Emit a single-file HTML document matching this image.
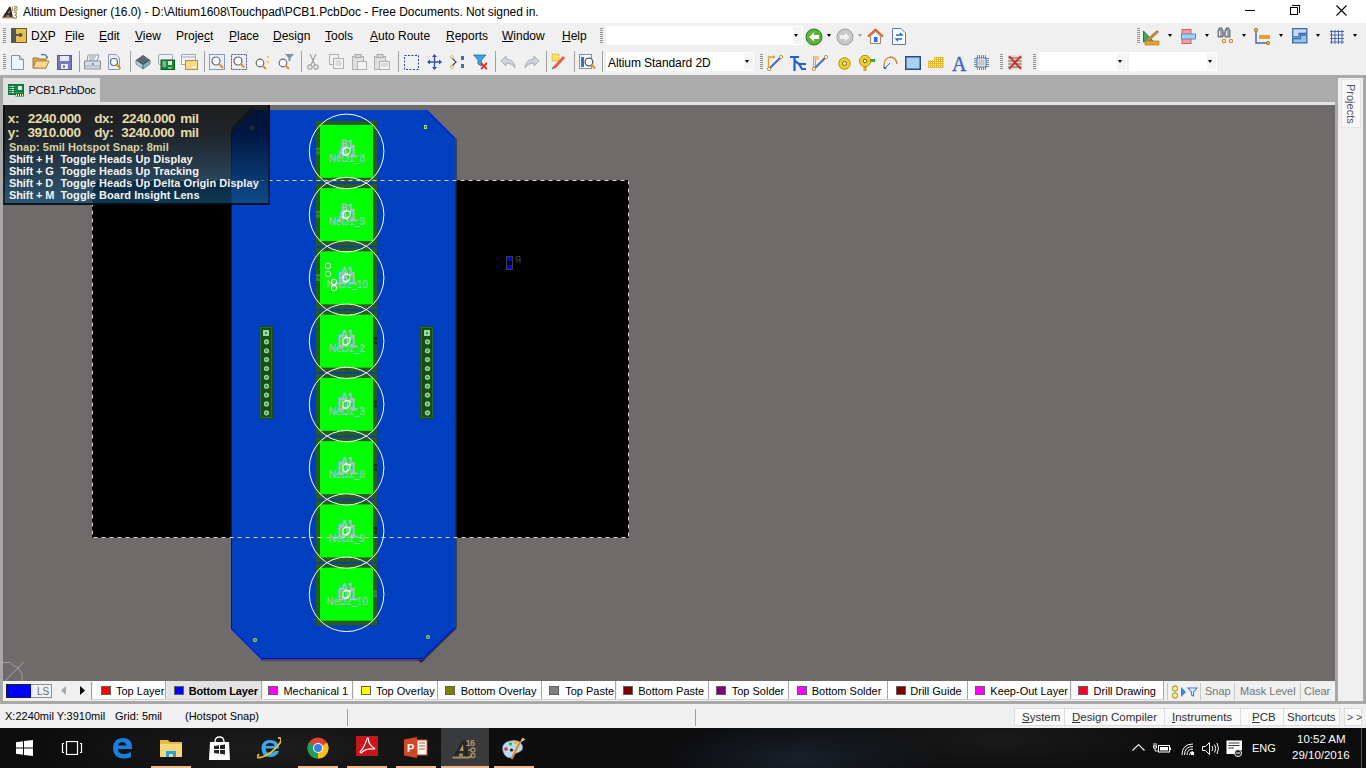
<!DOCTYPE html>
<html><head><meta charset="utf-8">
<style>
*{margin:0;padding:0;box-sizing:border-box}
html,body{width:1366px;height:768px;overflow:hidden;background:#f0f0f0;font-family:"Liberation Sans",sans-serif;font-size:12px;color:#000}
.a{position:absolute}
.t{position:absolute;white-space:nowrap;line-height:1}
u{text-decoration:underline;text-underline-offset:1px}
#title{left:0;top:0;width:1366px;height:22px;background:#fff}
#menu{left:0;top:22px;width:1366px;height:26px;background:#f0f0f0}
#tb{left:0;top:48px;width:1366px;height:27px;background:#f0f0f0}
#tabs{left:0;top:75px;width:1366px;height:30px;background:#ababab}
#canvas{left:3px;top:105px;width:1332px;height:576px;background:#6f6b6a;overflow:hidden}
#layers{left:0;top:681px;width:1366px;height:23px;background:#f0f0f0}
#status{left:0;top:704px;width:1366px;height:24px;background:#f0f0f0}
#task{left:0;top:728px;width:1366px;height:40px;background:#1b1a1a;overflow:hidden}
.grip{width:3px;background:repeating-linear-gradient(#909090 0 1px,transparent 1px 2px)}
.sep{top:3px;width:1px;height:21px;background:#a0a0a0}
.arr{width:0;height:0;border-left:2.8px solid transparent;border-right:2.8px solid transparent;border-top:3.5px solid #000}
.hud{font-weight:bold;letter-spacing:-0.2px}
.ltab{top:0;height:18.5px;border-right:1px solid #a8a8a8;border-bottom:1px solid #d0d0d0;border-radius:0 0 1px 1px}
.sb{font-size:11.5px;color:#303030}

</style></head><body>
<!-- TITLE -->
<div id="title" class="a">
 <svg class="a" style="left:0px;top:2px" width="20" height="18" viewBox="0 0 20 18">
  <path d="M2.3 15.5 L9.3 4.8 L10.6 4.8 L13 15.5 Z" fill="#262626"/>
  <path d="M7.8 11.5 L9.6 7.5 L9.9 11.5Z" fill="#b09060"/>
  <rect x="6.5" y="13" width="3" height="2.5" fill="#a08050"/>
  <rect x="2.2" y="14.8" width="12" height="1.6" fill="#a88a5a"/>
  <path d="M12.5 4.5V9M14 5Q17.5 4 17 6Q14 6 14.5 8.5Q17 9.5 17 7" fill="none" stroke="#a88a5a" stroke-width="1.1"/>
  <path d="M13.5 10.5Q16.5 9.5 16.5 11.5Q16 13 14.5 13Q17 13.5 16.5 15.5Q15 17 13.5 15.5" fill="none" stroke="#a88a5a" stroke-width="1.1"/>
 </svg>
 <div class="t" style="left:23px;top:6px;font-size:12px;letter-spacing:-0.05px">Altium Designer (16.0) - D:\Altium1608\Touchpad\PCB1.PcbDoc - Free Documents. Not signed in.</div>
 <div class="a" style="left:1245px;top:10px;width:10px;height:1px;background:#000"></div>
 <div class="a" style="left:1290px;top:7px;width:8px;height:8px;border:1px solid #000"></div>
 <div class="a" style="left:1292px;top:5px;width:8px;height:8px;border-top:1px solid #000;border-right:1px solid #000"></div>
 <svg class="a" style="left:1336px;top:5px" width="11" height="11"><path d="M0.5 0.5L10.5 10.5M10.5 0.5L0.5 10.5" stroke="#000" stroke-width="1.1"/></svg>
</div>
<!-- MENU -->
<div id="menu" class="a">
 <div class="a" style="left:0;top:0;width:1366px;height:1px;background:#fff"></div>
 <div class="grip a" style="left:3px;top:6px;height:15px"></div>
 <svg class="a" style="left:11px;top:6px" width="16" height="15" viewBox="0 0 16 15">
  <rect x="0.5" y="0.5" width="15" height="14" fill="#e8c050" stroke="#6b5a30"/>
  <rect x="1" y="1" width="4" height="13" fill="#555"/>
  <rect x="5" y="6" width="4" height="2" fill="#555"/>
  <circle cx="9.5" cy="7" r="2" fill="#555"/>
 </svg>
 <div class="t" style="left:31px;top:8px">D<u>X</u>P</div>
 <div class="t" style="left:65px;top:8px"><u>F</u>ile</div>
 <div class="t" style="left:99px;top:8px"><u>E</u>dit</div>
 <div class="t" style="left:135px;top:8px"><u>V</u>iew</div>
 <div class="t" style="left:176px;top:8px">Proje<u>c</u>t</div>
 <div class="t" style="left:229px;top:8px"><u>P</u>lace</div>
 <div class="t" style="left:273px;top:8px"><u>D</u>esign</div>
 <div class="t" style="left:325px;top:8px"><u>T</u>ools</div>
 <div class="t" style="left:370px;top:8px"><u>A</u>uto Route</div>
 <div class="t" style="left:446px;top:8px"><u>R</u>eports</div>
 <div class="t" style="left:502px;top:8px"><u>W</u>indow</div>
 <div class="t" style="left:562px;top:8px"><u>H</u>elp</div>
 <div class="grip a" style="left:600px;top:6px;height:15px"></div>
 <div class="a" style="left:606px;top:4px;width:197px;height:19px;background:#fff"></div>
 <div class="a" style="left:793px;top:5px;width:9px;height:17px;background:#f4f4f4"></div>
 <div class="arr a" style="left:794px;top:12px"></div>
 <svg class="a" style="left:805px;top:6px" width="18" height="18" viewBox="0 0 18 18">
  <circle cx="9" cy="9" r="8" fill="#5cb43c" stroke="#2e7a20"/>
  <path d="M4 9 L9 4.5 L9 7 L14 7 L14 11 L9 11 L9 13.5Z" fill="#fff"/>
 </svg>
 <div class="arr a" style="left:827px;top:12px"></div>
 <svg class="a" style="left:836px;top:6px" width="18" height="18" viewBox="0 0 18 18">
  <circle cx="9" cy="9" r="8" fill="#c8c8c8" stroke="#a0a0a0"/>
  <path d="M14 9 L9 4.5 L9 7 L4 7 L4 11 L9 11 L9 13.5Z" fill="#f0f0f0"/>
 </svg>
 <div class="arr a" style="left:858px;top:12px;border-top-color:#a0a0a0"></div>
 <svg class="a" style="left:867px;top:6px" width="17" height="17" viewBox="0 0 17 17">
  <path d="M1 8.5 L8.5 1.5 L16 8.5" fill="none" stroke="#d8602a" stroke-width="2"/>
  <path d="M3.5 8 L8.5 3.5 L13.5 8 L13.5 15.5 L3.5 15.5Z" fill="#f8f8f8" stroke="#a08070"/>
  <rect x="7" y="9" width="3.5" height="5" fill="#2d6fd0"/>
 </svg>
 <svg class="a" style="left:892px;top:6px" width="14" height="17" viewBox="0 0 14 17">
  <path d="M0.5 0.5 L9 0.5 L13.5 5 L13.5 16.5 L0.5 16.5Z" fill="#fff" stroke="#5a7ab0"/>
  <path d="M4 7 L10 7 L8 5 M10 11 L4 11 L6 13" fill="none" stroke="#1a6ad0" stroke-width="1.3"/>
 </svg>
 <div class="grip a" style="left:1137px;top:6px;height:15px"></div>
 <svg class="a" style="left:1143px;top:7px" width="18" height="17" viewBox="0 0 18 17">
  <path d="M0.5 2 L0.5 13 L11 13Z" fill="#3aa860" stroke="#1e7a40"/>
  <path d="M4 12 L15 2" stroke="#c08040" stroke-width="3"/>
  <rect x="2" y="12" width="14" height="4" fill="#e8a030" stroke="#b07020" stroke-width="0.6"/>
 </svg>
 <div class="arr a" style="left:1168px;top:12px"></div>
 <svg class="a" style="left:1181px;top:7px" width="15" height="15" viewBox="0 0 15 15">
  <rect x="1" y="0.5" width="9" height="14" fill="#f2a0a0" stroke="#d06060"/>
  <rect x="0.5" y="5" width="14" height="5" fill="#a8d0f0" stroke="#4a90c8"/>
 </svg>
 <div class="arr a" style="left:1205px;top:12px"></div>
 <svg class="a" style="left:1217px;top:5px" width="16" height="17" viewBox="0 0 16 17">
  <path d="M2 1H5V3H6V6H8V3H9V1H12V3H13V10H8V8H6V10H1V3H2Z" fill="#9aa4ac" stroke="#4a5258" stroke-width="0.8"/>
  <path d="M2.5 4V9M9.5 4V9" stroke="#e8eef2" stroke-width="1"/>
  <circle cx="7" cy="14" r="1.7" fill="none" stroke="#c89030" stroke-width="1.2"/>
  <circle cx="14" cy="14" r="1.7" fill="none" stroke="#c89030" stroke-width="1.2"/>
 </svg>
 <div class="arr a" style="left:1242px;top:12px"></div>
 <svg class="a" style="left:1254px;top:6px" width="17" height="17" viewBox="0 0 17 17">
  <path d="M2 2 L2 15 L14 15" fill="none" stroke="#4a6ab0" stroke-width="1.5"/>
  <rect x="5" y="7" width="11" height="4" fill="#e8a030"/>
  <circle cx="2" cy="2" r="1.6" fill="#f0c060" stroke="#a07020"/>
  <circle cx="14" cy="15" r="1.6" fill="#f0c060" stroke="#a07020"/>
 </svg>
 <div class="arr a" style="left:1279px;top:12px"></div>
 <svg class="a" style="left:1292px;top:6px" width="16" height="16" viewBox="0 0 16 16">
  <path d="M0.7 0.7H14.8V5.5H7V8.8H0.7Z" fill="#c0dcf4" stroke="#3a68a8" stroke-width="1.3"/>
  <path d="M0.7 14.8V10.5H8.5V7H14.8V14.8Z" fill="#94c4ea" stroke="#3a68a8" stroke-width="1.3"/>
 </svg>
 <div class="arr a" style="left:1316px;top:12px"></div>
 <svg class="a" style="left:1329px;top:7px" width="16" height="16" viewBox="0 0 16 16">
  <path d="M2.5 1V15M6 1V15M9.5 1V15M13 1V15M1 2.5H15M1 6H15M1 9.5H15M1 13H15" stroke="#4a68a8" stroke-width="1"/>
 </svg>
 <div class="arr a" style="left:1353px;top:12px"></div>
</div>

<!-- TOOLBAR -->
<div id="tb" class="a">
 <div class="grip a" style="left:3px;top:6px;height:15px"></div>
 <svg class="a" style="left:11px;top:7px" width="13" height="15" viewBox="0 0 13 15"><path d="M0.5 0.5H8.5L12.5 4.5V14.5H0.5Z" fill="#eef4fc" stroke="#8090b0"/><path d="M8.5 0.5V4.5H12.5" fill="#c8d4e8" stroke="#8090b0"/></svg>
 <svg class="a" style="left:32px;top:5px" width="18" height="17" viewBox="0 0 18 17"><path d="M1 5H6L7 6H14V15H1Z" fill="#d8a850" stroke="#a07830"/><path d="M1 15L4 8H17L14 15Z" fill="#f8d890" stroke="#b08840"/><path d="M9 2Q13 0 15 4" fill="none" stroke="#4070a0" stroke-width="1.2"/><path d="M13.5 4.5L16 3.5L15.5 6Z" fill="#4070a0"/></svg>
 <svg class="a" style="left:57px;top:7px" width="15" height="15" viewBox="0 0 15 15"><rect x="0.5" y="0.5" width="14" height="14" fill="#7a78b8" stroke="#5a58a0"/><rect x="3" y="1" width="9" height="5" fill="#e8e8f8"/><rect x="4" y="9" width="7" height="5" fill="#e8e8f8"/><rect x="6" y="10.5" width="2" height="2" fill="#5a58a0"/></svg>
 <div class="sep a" style="left:79px"></div>
 <svg class="a" style="left:84px;top:6px" width="17" height="16" viewBox="0 0 17 16"><path d="M4 1H15L13 7H3Z" fill="#fafafa" stroke="#9098a8"/><path d="M5 3H12M5 5H11" stroke="#9098a8"/><path d="M0.5 7H16.5V15H0.5Z" fill="#d8dce4" stroke="#8890a0"/><path d="M1 12H16" stroke="#a0a8b8"/><rect x="8" y="9" width="1.5" height="2" fill="#707880"/></svg>
 <svg class="a" style="left:108px;top:6px" width="14" height="16" viewBox="0 0 14 16"><path d="M0.5 0.5H8L11.5 4V15.5H0.5Z" fill="#e8f0fa" stroke="#8898b8"/><circle cx="6" cy="8" r="3.5" fill="#fff" stroke="#606878" stroke-width="1.2"/><path d="M8.5 10.5L12.5 14.5" stroke="#e09030" stroke-width="2.2"/></svg>
 <div class="sep a" style="left:130px"></div>
 <svg class="a" style="left:135px;top:6px" width="16" height="15" viewBox="0 0 16 15"><path d="M1 6L8 1L15 6L8 11Z" fill="#405060"/><path d="M3 5L9 9M5 3.5L11 7.5M7 2.5L13 6" stroke="#90a0b0" stroke-width="0.8"/><path d="M1 6V10L8 15V11Z" fill="#a8d8d8" stroke="#405060" stroke-width="0.6"/><path d="M15 6V10L8 15V11Z" fill="#80b8c0" stroke="#405060" stroke-width="0.6"/></svg>
 <svg class="a" style="left:158px;top:6px" width="17" height="16" viewBox="0 0 17 16"><rect x="0.5" y="0.5" width="14" height="10" rx="1.5" fill="#eef2f6" stroke="#a0a8b0"/><rect x="3" y="6" width="13.5" height="9.5" fill="#1a8a3a" stroke="#0a5a20"/><rect x="10" y="7" width="4" height="4" fill="#c8f0d0"/><path d="M4.5 8H8M4.5 10H8M4.5 12H8M11 13V15M13 13V15" stroke="#c8f0d0"/></svg>
 <svg class="a" style="left:181px;top:6px" width="17" height="16" viewBox="0 0 17 16"><rect x="0.5" y="0.5" width="14" height="10" fill="#f4f4f8" stroke="#a0a8c0"/><path d="M1 3H14" stroke="#a0a8c0"/><rect x="4.5" y="6.5" width="12" height="9" fill="#f8d880" stroke="#b09040"/><rect x="11" y="12" width="4" height="2" fill="#fff"/></svg>
 <div class="sep a" style="left:204px"></div>
 <svg class="a" style="left:209px;top:6px" width="16" height="16" viewBox="0 0 16 16"><rect x="0.5" y="0.5" width="15" height="15" fill="#e8f0fa" stroke="#8898c0"/><circle cx="7" cy="7" r="4" fill="#fff" stroke="#606878" stroke-width="1.2"/><path d="M10 10L14 14" stroke="#e09030" stroke-width="2.2"/></svg>
 <svg class="a" style="left:231px;top:6px" width="16" height="16" viewBox="0 0 16 16"><rect x="0.5" y="0.5" width="15" height="15" fill="none" stroke="#4050a0" stroke-dasharray="2 1"/><circle cx="7" cy="7" r="4" fill="#fff" stroke="#606878" stroke-width="1.2"/><path d="M10 10L13.5 13.5" stroke="#e09030" stroke-width="2.2"/></svg>
 <svg class="a" style="left:254px;top:6px" width="17" height="16" viewBox="0 0 17 16"><circle cx="6" cy="9" r="3.8" fill="#fff" stroke="#606878" stroke-width="1.2"/><path d="M9 12L12 15" stroke="#e09030" stroke-width="2.2"/><path d="M13 2L15 4M13 7L15 9" stroke="#e8c030" stroke-width="1.5"/></svg>
 <svg class="a" style="left:277px;top:5px" width="18" height="17" viewBox="0 0 18 17"><circle cx="6" cy="10" r="3.8" fill="#fff" stroke="#606878" stroke-width="1.2"/><path d="M9 13L12 16" stroke="#e09030" stroke-width="2.2"/><path d="M8 1H17L13.5 5V8H11.5V5Z" fill="#8090a0"/></svg>
 <div class="sep a" style="left:301px"></div>
 <svg class="a" style="left:307px;top:6px" width="12" height="16" viewBox="0 0 12 16"><path d="M3 0L8 11M9 0L4 11" stroke="#a0a0a0" stroke-width="1.2"/><circle cx="3" cy="13" r="2.2" fill="none" stroke="#a0a0a0" stroke-width="1.2"/><circle cx="9" cy="13" r="2.2" fill="none" stroke="#a0a0a0" stroke-width="1.2"/></svg>
 <svg class="a" style="left:329px;top:6px" width="15" height="15" viewBox="0 0 15 15"><rect x="0.5" y="0.5" width="9" height="10" fill="#f0f0f0" stroke="#b0b0b0"/><rect x="4.5" y="4.5" width="10" height="10" fill="#f4f4f4" stroke="#b0b0b0"/><path d="M6.5 7H12.5M6.5 9H12.5M6.5 11H12.5" stroke="#c0c0c0"/></svg>
 <svg class="a" style="left:352px;top:6px" width="15" height="16" viewBox="0 0 15 16"><rect x="0.5" y="2.5" width="11" height="13" fill="#e0e0e0" stroke="#b0b0b0"/><rect x="3" y="0.5" width="6" height="3" fill="#d8d8d8" stroke="#a8a8a8"/><rect x="5.5" y="7.5" width="9" height="8" fill="#f4f4f4" stroke="#b0b0b0"/></svg>
 <svg class="a" style="left:374px;top:6px" width="16" height="16" viewBox="0 0 16 16"><rect x="0.5" y="2.5" width="11" height="13" fill="#e0e0e0" stroke="#b0b0b0"/><rect x="3" y="0.5" width="6" height="3" fill="#d8d8d8" stroke="#a8a8a8"/><rect x="5.5" y="7.5" width="10" height="8" fill="#f4f4f4" stroke="#b0b0b0"/><path d="M7 10H14M7 12H14" stroke="#c0c0c0"/></svg>
 <div class="sep a" style="left:398px"></div>
 <svg class="a" style="left:404px;top:7px" width="15" height="15" viewBox="0 0 15 15"><rect x="0.5" y="0.5" width="14" height="14" fill="none" stroke="#2840a0" stroke-dasharray="2 1.5"/></svg>
 <svg class="a" style="left:427px;top:6px" width="15" height="16" viewBox="0 0 15 16"><path d="M7.5 1V15M1 8H14" stroke="#3050a0" stroke-width="1.3"/><path d="M7.5 0L5 3H10Z M7.5 16L5 13H10Z M0 8L3 5.5V10.5Z M15 8L12 5.5V10.5Z" fill="#3050a0"/></svg>
 <svg class="a" style="left:450px;top:6px" width="15" height="16" viewBox="0 0 15 16"><path d="M1 3L6 8L1 13" fill="none" stroke="#404858" stroke-width="1.2"/><circle cx="2" cy="3" r="1.5" fill="#f8f0a0" stroke="#c0b040" stroke-width="0.6"/><circle cx="2" cy="13" r="1.5" fill="#f8f0a0" stroke="#c0b040" stroke-width="0.6"/><rect x="11" y="2" width="3" height="4" fill="#4a6ab0"/><rect x="11" y="10" width="3" height="4" fill="#4a6ab0"/></svg>
 <svg class="a" style="left:473px;top:6px" width="15" height="16" viewBox="0 0 15 16"><path d="M0.5 1H13L8.5 6V12L5 10V6Z" fill="#40a0e0" stroke="#2070b0" stroke-width="0.8"/><path d="M8 9L14 15M14 9L8 15" stroke="#e03030" stroke-width="1.8"/></svg>
 <div class="sep a" style="left:495px"></div>
 <svg class="a" style="left:500px;top:7px" width="16" height="14" viewBox="0 0 16 14"><path d="M6 1L1 6L6 11V8Q12 8 15 13Q14 4 6 4Z" fill="#d0d4dc" stroke="#a8acb4"/></svg>
 <svg class="a" style="left:524px;top:7px" width="16" height="14" viewBox="0 0 16 14"><path d="M10 1L15 6L10 11V8Q4 8 1 13Q2 4 10 4Z" fill="#d0d4dc" stroke="#a8acb4"/></svg>
 <div class="sep a" style="left:546px"></div>
 <svg class="a" style="left:551px;top:5px" width="16" height="17" viewBox="0 0 16 17"><rect x="1" y="1" width="7" height="7" fill="#f8e060" stroke="#d0b030" stroke-dasharray="1.5 1"/><path d="M3 15L13 4" stroke="#e86050" stroke-width="3"/><path d="M1 16L3 14" stroke="#606060" stroke-width="1.2"/></svg>
 <div class="sep a" style="left:574px"></div>
 <svg class="a" style="left:579px;top:6px" width="17" height="16" viewBox="0 0 17 16"><rect x="0.5" y="0.5" width="12" height="14" fill="#f4f6f8" stroke="#8090a8"/><rect x="2" y="3" width="3" height="10" fill="#3a70c0"/><circle cx="10" cy="8" r="3.8" fill="#fff" stroke="#505868" stroke-width="1.3"/><path d="M12.5 10.5L16 14.5" stroke="#e09030" stroke-width="2.2"/></svg>
 <div class="sep a" style="left:602px"></div>
 <div class="a" style="left:606px;top:4px;width:148px;height:19px;background:#fff"></div>
 <div class="a" style="left:744px;top:5px;width:9px;height:17px;background:#f4f4f4"></div>
 <div class="arr a" style="left:745px;top:12px"></div>
 <div class="t" style="left:608px;top:9px;letter-spacing:-0.08px">Altium Standard 2D</div>
 <div class="grip a" style="left:760px;top:6px;height:15px"></div>
 <svg class="a" style="left:767px;top:6px" width="16" height="17" viewBox="0 0 16 17"><path d="M1.5 14V3H7" fill="none" stroke="#e0a020" stroke-width="1.3"/><path d="M6 1L8.5 3L6 5Z" fill="#e0a020"/><path d="M2 15L14 3" stroke="#5068b8" stroke-width="2"/><circle cx="2" cy="15" r="1.6" fill="#fff" stroke="#c09030"/><circle cx="14" cy="3" r="1.6" fill="#fff" stroke="#c09030"/></svg>
 <svg class="a" style="left:790px;top:7px" width="16" height="16" viewBox="0 0 16 16"><path d="M0 2H9M4.5 2V16M5 6L9 9H16M9 9L12 14H16" fill="none" stroke="#2060d0" stroke-width="2.2"/></svg>
 <svg class="a" style="left:812px;top:6px" width="16" height="17" viewBox="0 0 16 17"><path d="M1.5 14V3H7M3.5 14V5H7" fill="none" stroke="#e0a020" stroke-width="1.1"/><path d="M2 15L14 3" stroke="#5068b8" stroke-width="2"/><circle cx="2" cy="15" r="1.6" fill="#fff" stroke="#c09030"/><circle cx="14" cy="3" r="1.6" fill="#fff" stroke="#c09030"/></svg>
 <svg class="a" style="left:838px;top:9px" width="13" height="13" viewBox="0 0 13 13"><circle cx="6.5" cy="6.5" r="5.8" fill="#f0d020" stroke="#b09010"/><circle cx="6.5" cy="6.5" r="2" fill="#fff" stroke="#806010"/></svg>
 <svg class="a" style="left:859px;top:7px" width="17" height="16" viewBox="0 0 17 16"><rect x="4.5" y="9" width="3" height="7" fill="#e0a030"/><rect x="9" y="4" width="7" height="3" fill="#30b030"/><circle cx="6" cy="6" r="5.6" fill="#f0d020" stroke="#b09010"/><circle cx="6" cy="6" r="1.8" fill="#fff" stroke="#806010"/></svg>
 <svg class="a" style="left:882px;top:7px" width="16" height="15" viewBox="0 0 16 15"><path d="M2 13Q1 4 8 2Q14 2 15 9" fill="none" stroke="#c88030" stroke-width="1.3"/><path d="M3 13L8 8" stroke="#3060c0" stroke-width="1"/><circle cx="3" cy="13" r="1.3" fill="#3060c0"/></svg>
 <svg class="a" style="left:905px;top:8px" width="16" height="14" viewBox="0 0 16 14"><rect x="0.75" y="0.75" width="14.5" height="12.5" fill="#a8d0f0" stroke="#2a4a88" stroke-width="1.5"/></svg>
 <svg class="a" style="left:928px;top:9px" width="16" height="12" viewBox="0 0 16 12"><path d="M0 3.5H6V0H15.5V11H0Z" fill="#e8b830"/><path d="M7.0 1.5h1M9.0 1.5h1M11.0 1.5h1M13.0 1.5h1M1.0 3.5h1M3.0 3.5h1M5.0 3.5h1M7.0 3.5h1M9.0 3.5h1M11.0 3.5h1M13.0 3.5h1M1.0 5.5h1M3.0 5.5h1M5.0 5.5h1M7.0 5.5h1M9.0 5.5h1M11.0 5.5h1M13.0 5.5h1M1.0 7.5h1M3.0 7.5h1M5.0 7.5h1M7.0 7.5h1M9.0 7.5h1M11.0 7.5h1M13.0 7.5h1M1.0 9.5h1M3.0 9.5h1M5.0 9.5h1M7.0 9.5h1M9.0 9.5h1M11.0 9.5h1M13.0 9.5h1" stroke="#fff8e0" stroke-width="1"/></svg>
 <div class="t" style="left:952px;top:6px;font-family:'Liberation Serif',serif;font-size:20px;color:#3a68d8;-webkit-text-stroke:0.3px #2a50a0">A</div>
 <svg class="a" style="left:974px;top:7px" width="15" height="15" viewBox="0 0 15 15"><rect x="3" y="3" width="9" height="9" fill="#c0c8d0" stroke="#6080a0" stroke-width="1.2"/><rect x="4" y="4" width="7" height="7" fill="none" stroke="#fff" stroke-width="0.6"/><path d="M3.5 0V3M5.5 0V3M7.5 0V3M9.5 0V3M11.5 0V3M3.5 12V15M5.5 12V15M7.5 12V15M9.5 12V15M11.5 12V15M0 3.5H3M0 5.5H3M0 7.5H3M0 9.5H3M0 11.5H3M12 3.5H15M12 5.5H15M12 7.5H15M12 9.5H15M12 11.5H15" stroke="#6080a0" stroke-width="0.9"/></svg>
 <div class="grip a" style="left:1000px;top:6px;height:15px"></div>
 <svg class="a" style="left:1008px;top:7px" width="14" height="15" viewBox="0 0 14 15"><rect x="1" y="0.5" width="12" height="14" fill="#e0d8c8"/><path d="M0 3H14M0 6H14M0 9H14M0 12H14" stroke="#706860"/><path d="M1 1L13 14M13 1L1 14" stroke="#e02020" stroke-width="1.8"/></svg>
 <div class="grip a" style="left:1033px;top:6px;height:15px"></div>
 <div class="a" style="left:1039px;top:4px;width:88px;height:19px;background:#fff"></div>
 <div class="a" style="left:1117px;top:5px;width:9px;height:17px;background:#f4f4f4"></div>
 <div class="arr a" style="left:1118px;top:12px"></div>
 <div class="a" style="left:1129px;top:4px;width:88px;height:19px;background:#fff"></div>
 <div class="a" style="left:1207px;top:5px;width:9px;height:17px;background:#f4f4f4"></div>
 <div class="arr a" style="left:1208px;top:12px"></div>
</div>

<!-- TABS -->
<div id="tabs" class="a">
 <div class="a" style="left:0;top:0;width:3px;height:30px;background:#a8a8a8"></div>
 <div class="a" style="left:3px;top:3px;width:97px;height:24px;background:#e1e1e1"></div>
 <svg class="a" style="left:8px;top:9px" width="16" height="13" viewBox="0 0 16 13">
  <path d="M0 0H16V12.5H7.5V11H0Z" fill="#0e7a3e"/>
  <rect x="10" y="2" width="4" height="4" fill="#d8f0e0"/>
  <path d="M1.5 2.5H2.5M1.5 4.5H2.5M1.5 6.5H2.5M1.5 8.5H2.5M3.5 2.5H6M3.5 4.5H6M3.5 6.5H6M3.5 8.5H6" stroke="#e8f8e8"/>
  <path d="M7 2.5H9M7 4.5H9M7 6.5H9M7 8.5H14" stroke="#30a060"/>
  <path d="M8.5 10V12M10.5 10V12M12.5 10V12M14.5 10V12" stroke="#f0f0b0"/>
 </svg>
 <div class="t" style="left:28.5px;top:10px;font-size:11px;letter-spacing:-0.3px">PCB1.PcbDoc</div>
 <div class="a" style="left:3px;top:27px;width:1332px;height:3px;background:#e3e3e3"></div>
 <div class="a" style="left:1338px;top:3px;width:25px;height:626px;background:#f0f0f0"></div>
 <div class="a" style="left:1341px;top:4px;width:20px;height:49px;background:#f9f9f9;border:1px solid #e4e4e4"></div>
 <div class="t" style="left:1344px;top:9px;transform-origin:0 0;transform:translate(12px,0) rotate(90deg);color:#505060;font-size:11px">Projects</div>
</div>
<!-- CANVAS -->
<div id="canvas" class="a">
<svg class="a" style="left:-3px;top:-105px" width="1366" height="768" viewBox="0 0 1366 768">
<rect x="92" y="180" width="537" height="358" fill="#000"/>
<rect x="506.5" y="256.5" width="6" height="13" fill="none" stroke="#404030" stroke-width="1"/>
<rect x="507" y="257" width="5" height="4" fill="#0000ff"/><rect x="507" y="265" width="5" height="4" fill="#0000ff"/>
<path d="M516 260Q515 256.5 518 256.5H520V263M517 260V263M517 260H520" fill="none" stroke="#505050" stroke-width="0.8"/>
<path d="M456 138.5V628L423.5 660H261" fill="none" stroke="#2a2a2a" stroke-width="1.2"/>
<path d="M253 110H427L455.5 138.5V627.5L423 659H261L231 629V132Z" fill="#0040c0"/>
<path d="M231.5 132V629L261 658.5H423L455 627.5M427 110.5L455 138.5" fill="none" stroke="#0000ff" stroke-width="1"/>
<path d="M231 128L252.5 106.5L254 110L231 133Z" fill="#3a4646"/>
<path d="M417.5 659.5H425.5L421 663Z" fill="#2a2a2a"/>
<circle cx="255" cy="640" r="2" fill="#a8e070"/><circle cx="255" cy="640" r="0.9" fill="#506010"/>
<circle cx="428" cy="637" r="2" fill="#a8e070"/><circle cx="428" cy="637" r="0.9" fill="#506010"/>
<circle cx="252" cy="128" r="2" fill="#a8e070"/><circle cx="252" cy="128" r="0.9" fill="#506010"/>
<rect x="424" y="125" width="3" height="4" fill="#a8e070"/><rect x="425" y="126" width="1" height="2" fill="#506010"/>
<rect x="316" y="120.80" width="61" height="61.7" fill="#2a5a22"/>
<rect x="320" y="124.80" width="53" height="53" fill="#00ff00"/>
<rect x="316" y="184.07" width="61" height="61.7" fill="#2a5a22"/>
<rect x="320" y="188.07" width="53" height="53" fill="#00ff00"/>
<rect x="316" y="247.34" width="61" height="61.7" fill="#2a5a22"/>
<rect x="320" y="251.34" width="53" height="53" fill="#00ff00"/>
<rect x="316" y="310.61" width="61" height="61.7" fill="#2a5a22"/>
<rect x="320" y="314.61" width="53" height="53" fill="#00ff00"/>
<rect x="316" y="373.88" width="61" height="61.7" fill="#2a5a22"/>
<rect x="320" y="377.88" width="53" height="53" fill="#00ff00"/>
<rect x="316" y="437.15" width="61" height="61.7" fill="#2a5a22"/>
<rect x="320" y="441.15" width="53" height="53" fill="#00ff00"/>
<rect x="316" y="500.42" width="61" height="61.7" fill="#2a5a22"/>
<rect x="320" y="504.42" width="53" height="53" fill="#00ff00"/>
<rect x="316" y="563.69" width="61" height="61.7" fill="#2a5a22"/>
<rect x="320" y="567.69" width="53" height="53" fill="#00ff00"/>
<circle cx="346.6" cy="151.40" r="37.3" fill="none" stroke="#ffffff" stroke-width="1"/>
<circle cx="346.6" cy="214.67" r="37.3" fill="none" stroke="#ffffff" stroke-width="1"/>
<circle cx="346.6" cy="277.94" r="37.3" fill="none" stroke="#ffffff" stroke-width="1"/>
<circle cx="346.6" cy="341.21" r="37.3" fill="none" stroke="#ffffff" stroke-width="1"/>
<circle cx="346.6" cy="404.48" r="37.3" fill="none" stroke="#ffffff" stroke-width="1"/>
<circle cx="346.6" cy="467.75" r="37.3" fill="none" stroke="#ffffff" stroke-width="1"/>
<circle cx="346.6" cy="531.02" r="37.3" fill="none" stroke="#ffffff" stroke-width="1"/>
<circle cx="346.6" cy="594.29" r="37.3" fill="none" stroke="#ffffff" stroke-width="1"/>
<text x="347" y="148.40" font-size="10" text-anchor="middle" fill="#b0c0e8" stroke="#b0c0e8" stroke-width="0.35" font-family="Liberation Sans">B1</text>
<text x="347.5" y="157.40" font-size="16" text-anchor="middle" fill="#b4b4f4" stroke="#b4b4f4" stroke-width="0.5" font-family="Liberation Sans" transform="translate(0,0)">A1</text>
<text x="347" y="161.90" font-size="11" text-anchor="middle" fill="#a8c0dc" stroke="#a8c0dc" stroke-width="0.15" font-family="Liberation Sans" textLength="36" lengthAdjust="spacingAndGlyphs">NetJ1_8</text>
<path d="M343 149.40L346 147.40L350 148.40L349.7 152.70L346.5 155.40L343 154.40Z" fill="none" stroke="#fff" stroke-width="1.3"/>
<text x="347" y="211.67" font-size="10" text-anchor="middle" fill="#b0c0e8" stroke="#b0c0e8" stroke-width="0.35" font-family="Liberation Sans">B1</text>
<text x="347.5" y="220.67" font-size="16" text-anchor="middle" fill="#b4b4f4" stroke="#b4b4f4" stroke-width="0.5" font-family="Liberation Sans" transform="translate(0,0)">A1</text>
<text x="347" y="225.17" font-size="11" text-anchor="middle" fill="#a8c0dc" stroke="#a8c0dc" stroke-width="0.15" font-family="Liberation Sans" textLength="36" lengthAdjust="spacingAndGlyphs">NetJ1_9</text>
<path d="M343 212.67L346 210.67L350 211.67L349.7 215.97L346.5 218.67L343 217.67Z" fill="none" stroke="#fff" stroke-width="1.3"/>
<text x="347" y="274.94" font-size="10" text-anchor="middle" fill="#b0c0e8" stroke="#b0c0e8" stroke-width="0.35" font-family="Liberation Sans">A1</text>
<text x="347.5" y="283.94" font-size="16" text-anchor="middle" fill="#b4b4f4" stroke="#b4b4f4" stroke-width="0.5" font-family="Liberation Sans" transform="translate(0,0)">B1</text>
<text x="347" y="288.44" font-size="11" text-anchor="middle" fill="#a8c0dc" stroke="#a8c0dc" stroke-width="0.15" font-family="Liberation Sans" textLength="41" lengthAdjust="spacingAndGlyphs">NetJ1_10</text>
<path d="M343 275.94L346 273.94L350 274.94L349.7 279.24L346.5 281.94L343 280.94Z" fill="none" stroke="#fff" stroke-width="1.3"/>
<text x="347" y="338.21" font-size="10" text-anchor="middle" fill="#b0c0e8" stroke="#b0c0e8" stroke-width="0.35" font-family="Liberation Sans">A1</text>
<text x="347.5" y="347.21" font-size="16" text-anchor="middle" fill="#b4b4f4" stroke="#b4b4f4" stroke-width="0.5" font-family="Liberation Sans" transform="translate(0,0)">D1</text>
<text x="347" y="351.71" font-size="11" text-anchor="middle" fill="#a8c0dc" stroke="#a8c0dc" stroke-width="0.15" font-family="Liberation Sans" textLength="36" lengthAdjust="spacingAndGlyphs">NetJ2_2</text>
<path d="M343 339.21L346 337.21L350 338.21L349.7 342.51L346.5 345.21L343 344.21Z" fill="none" stroke="#fff" stroke-width="1.3"/>
<text x="347" y="401.48" font-size="10" text-anchor="middle" fill="#b0c0e8" stroke="#b0c0e8" stroke-width="0.35" font-family="Liberation Sans">A1</text>
<text x="347.5" y="410.48" font-size="16" text-anchor="middle" fill="#b4b4f4" stroke="#b4b4f4" stroke-width="0.5" font-family="Liberation Sans" transform="translate(0,0)">D1</text>
<text x="347" y="414.98" font-size="11" text-anchor="middle" fill="#a8c0dc" stroke="#a8c0dc" stroke-width="0.15" font-family="Liberation Sans" textLength="36" lengthAdjust="spacingAndGlyphs">NetJ2_3</text>
<path d="M343 402.48L346 400.48L350 401.48L349.7 405.78L346.5 408.48L343 407.48Z" fill="none" stroke="#fff" stroke-width="1.3"/>
<text x="347" y="464.75" font-size="10" text-anchor="middle" fill="#b0c0e8" stroke="#b0c0e8" stroke-width="0.35" font-family="Liberation Sans">A1</text>
<text x="347.5" y="473.75" font-size="16" text-anchor="middle" fill="#b4b4f4" stroke="#b4b4f4" stroke-width="0.5" font-family="Liberation Sans" transform="translate(0,0)">D1</text>
<text x="347" y="478.25" font-size="11" text-anchor="middle" fill="#a8c0dc" stroke="#a8c0dc" stroke-width="0.15" font-family="Liberation Sans" textLength="36" lengthAdjust="spacingAndGlyphs">NetJ2_8</text>
<path d="M343 465.75L346 463.75L350 464.75L349.7 469.05L346.5 471.75L343 470.75Z" fill="none" stroke="#fff" stroke-width="1.3"/>
<text x="347" y="528.02" font-size="10" text-anchor="middle" fill="#b0c0e8" stroke="#b0c0e8" stroke-width="0.35" font-family="Liberation Sans">A1</text>
<text x="347.5" y="537.02" font-size="16" text-anchor="middle" fill="#b4b4f4" stroke="#b4b4f4" stroke-width="0.5" font-family="Liberation Sans" transform="translate(0,0)">D1</text>
<text x="347" y="541.52" font-size="11" text-anchor="middle" fill="#a8c0dc" stroke="#a8c0dc" stroke-width="0.15" font-family="Liberation Sans" textLength="36" lengthAdjust="spacingAndGlyphs">NetJ2_9</text>
<path d="M343 529.02L346 527.02L350 528.02L349.7 532.32L346.5 535.02L343 534.02Z" fill="none" stroke="#fff" stroke-width="1.3"/>
<text x="347" y="591.29" font-size="10" text-anchor="middle" fill="#b0c0e8" stroke="#b0c0e8" stroke-width="0.35" font-family="Liberation Sans">A1</text>
<text x="347.5" y="600.29" font-size="16" text-anchor="middle" fill="#b4b4f4" stroke="#b4b4f4" stroke-width="0.5" font-family="Liberation Sans" transform="translate(0,0)">D1</text>
<text x="347" y="604.79" font-size="11" text-anchor="middle" fill="#a8c0dc" stroke="#a8c0dc" stroke-width="0.15" font-family="Liberation Sans" textLength="41" lengthAdjust="spacingAndGlyphs">NetJ2_10</text>
<path d="M343 592.29L346 590.29L350 591.29L349.7 595.59L346.5 598.29L343 597.29Z" fill="none" stroke="#fff" stroke-width="1.3"/>
<circle cx="328" cy="266" r="2.8" fill="none" stroke="#fff" stroke-width="1"/>
<circle cx="328" cy="274" r="2.8" fill="none" stroke="#fff" stroke-width="1"/>
<circle cx="334" cy="282" r="2.8" fill="none" stroke="#fff" stroke-width="1"/>
<circle cx="334" cy="288" r="2.8" fill="none" stroke="#fff" stroke-width="1"/>
<rect x="316" y="147.40" width="4" height="3" fill="#4a7a40"/><rect x="316" y="151.40" width="4" height="3" fill="#4a7a40"/>
<rect x="316" y="210.67" width="4" height="3" fill="#4a7a40"/><rect x="316" y="214.67" width="4" height="3" fill="#4a7a40"/>
<rect x="316" y="273.94" width="4" height="3" fill="#4a7a40"/><rect x="316" y="277.94" width="4" height="3" fill="#4a7a40"/>
<rect x="373" y="337.21" width="4" height="3" fill="#0a3a0a"/><rect x="373" y="341.21" width="4" height="3" fill="#0a3a0a"/>
<rect x="373" y="400.48" width="4" height="3" fill="#0a3a0a"/><rect x="373" y="404.48" width="4" height="3" fill="#0a3a0a"/>
<rect x="373" y="463.75" width="4" height="3" fill="#0a3a0a"/><rect x="373" y="467.75" width="4" height="3" fill="#0a3a0a"/>
<rect x="373" y="527.02" width="4" height="3" fill="#0a3a0a"/><rect x="373" y="531.02" width="4" height="3" fill="#0a3a0a"/>
<rect x="373" y="590.29" width="4" height="3" fill="#4a7a40"/><rect x="373" y="594.29" width="4" height="3" fill="#4a7a40"/>
<rect x="259" y="326" width="14" height="93" rx="1" fill="#1a4a1a"/>
<rect x="260.5" y="327.5" width="11" height="90" fill="none" stroke="#2a6a2a" stroke-width="1"/>
<rect x="263" y="330" width="6" height="6" fill="#98d898"/><rect x="265" y="332" width="2" height="2" fill="#20a040"/>
<circle cx="266.5" cy="341.87" r="2.6" fill="#98d898"/><circle cx="266.5" cy="341.87" r="1.2" fill="#20a060"/>
<circle cx="266.5" cy="350.74" r="2.6" fill="#98d898"/><circle cx="266.5" cy="350.74" r="1.2" fill="#20a060"/>
<circle cx="266.5" cy="359.61" r="2.6" fill="#98d898"/><circle cx="266.5" cy="359.61" r="1.2" fill="#20a060"/>
<circle cx="266.5" cy="368.48" r="2.6" fill="#98d898"/><circle cx="266.5" cy="368.48" r="1.2" fill="#20a060"/>
<circle cx="266.5" cy="377.35" r="2.6" fill="#98d898"/><circle cx="266.5" cy="377.35" r="1.2" fill="#20a060"/>
<circle cx="266.5" cy="386.22" r="2.6" fill="#98d898"/><circle cx="266.5" cy="386.22" r="1.2" fill="#20a060"/>
<circle cx="266.5" cy="395.09" r="2.6" fill="#98d898"/><circle cx="266.5" cy="395.09" r="1.2" fill="#20a060"/>
<circle cx="266.5" cy="403.96" r="2.6" fill="#98d898"/><circle cx="266.5" cy="403.96" r="1.2" fill="#20a060"/>
<circle cx="266.5" cy="412.83" r="2.6" fill="#98d898"/><circle cx="266.5" cy="412.83" r="1.2" fill="#20a060"/>
<rect x="420" y="326" width="14" height="93" rx="1" fill="#1a4a1a"/>
<rect x="421.5" y="327.5" width="11" height="90" fill="none" stroke="#2a6a2a" stroke-width="1"/>
<rect x="424" y="330" width="6" height="6" fill="#98d898"/><rect x="426" y="332" width="2" height="2" fill="#20a040"/>
<circle cx="427.5" cy="341.87" r="2.6" fill="#98d898"/><circle cx="427.5" cy="341.87" r="1.2" fill="#20a060"/>
<circle cx="427.5" cy="350.74" r="2.6" fill="#98d898"/><circle cx="427.5" cy="350.74" r="1.2" fill="#20a060"/>
<circle cx="427.5" cy="359.61" r="2.6" fill="#98d898"/><circle cx="427.5" cy="359.61" r="1.2" fill="#20a060"/>
<circle cx="427.5" cy="368.48" r="2.6" fill="#98d898"/><circle cx="427.5" cy="368.48" r="1.2" fill="#20a060"/>
<circle cx="427.5" cy="377.35" r="2.6" fill="#98d898"/><circle cx="427.5" cy="377.35" r="1.2" fill="#20a060"/>
<circle cx="427.5" cy="386.22" r="2.6" fill="#98d898"/><circle cx="427.5" cy="386.22" r="1.2" fill="#20a060"/>
<circle cx="427.5" cy="395.09" r="2.6" fill="#98d898"/><circle cx="427.5" cy="395.09" r="1.2" fill="#20a060"/>
<circle cx="427.5" cy="403.96" r="2.6" fill="#98d898"/><circle cx="427.5" cy="403.96" r="1.2" fill="#20a060"/>
<circle cx="427.5" cy="412.83" r="2.6" fill="#98d898"/><circle cx="427.5" cy="412.83" r="1.2" fill="#20a060"/>
<path d="M92.5 180.5H628.5V537.5H92.5Z" fill="none" stroke="#d8d8d8" stroke-width="1" stroke-dasharray="4 4"/>
<path d="M5 681L24 662M3 662.5H10L13 665.5L17 667L20 670.5L22 674V681" fill="none" stroke="#a8a8a8" stroke-width="0.9"/>
</svg>
 <div class="a" style="left:0;top:0;width:267px;height:100px;background:linear-gradient(#000 0%,#000a14 30%,#155078 100%);opacity:0.72"></div>
 <div class="a" style="left:265px;top:0;width:2px;height:98px;background:#000;opacity:0.5"></div>
 <div class="a" style="left:0;top:0;width:2px;height:98px;background:#000;opacity:0.5"></div>
 <div class="a" style="left:0;top:98px;width:267px;height:2px;background:#000;opacity:0.75"></div>
  <div class="t hud" style="left:4.8px;top:6.6px;font-size:13.5px;color:#e6dca6;letter-spacing:-0.4px">x:</div>
 <div class="t hud" style="left:24.8px;top:6.6px;font-size:13.5px;color:#e6dca6;letter-spacing:-0.4px">2240.000</div>
 <div class="t hud" style="left:91.2px;top:6.6px;font-size:13.5px;color:#e6dca6;letter-spacing:-0.4px">dx:</div>
 <div class="t hud" style="left:119px;top:6.6px;font-size:13.5px;color:#e6dca6;letter-spacing:-0.4px">2240.000</div>
 <div class="t hud" style="left:177.2px;top:6.6px;font-size:13.5px;color:#e6dca6;letter-spacing:-0.4px">mil</div>
 <div class="t hud" style="left:4.8px;top:21.2px;font-size:13.5px;color:#e6dca6;letter-spacing:-0.4px">y:</div>
 <div class="t hud" style="left:24.4px;top:21.2px;font-size:13.5px;color:#e6dca6;letter-spacing:-0.4px">3910.000</div>
 <div class="t hud" style="left:91.2px;top:21.2px;font-size:13.5px;color:#e6dca6;letter-spacing:-0.4px">dy:</div>
 <div class="t hud" style="left:118.3px;top:21.2px;font-size:13.5px;color:#e6dca6;letter-spacing:-0.4px">3240.000</div>
 <div class="t hud" style="left:177.2px;top:21.2px;font-size:13.5px;color:#e6dca6;letter-spacing:-0.4px">mil</div>
 <div class="t hud" style="left:6px;top:37px;font-size:11px;color:#d8d0a0;letter-spacing:0.03px">Snap: 5mil Hotspot Snap: 8mil</div>
 <div class="t hud" style="left:6px;top:49px;font-size:11px;color:#f4f4f4;letter-spacing:-0.1px">Shift + H</div>
 <div class="t hud" style="left:57.4px;top:49px;font-size:11px;color:#f4f4f4;letter-spacing:0.05px">Toggle Heads Up Display</div>
 <div class="t hud" style="left:6px;top:61px;font-size:11px;color:#f4f4f4;letter-spacing:-0.1px">Shift + G</div>
 <div class="t hud" style="left:57.4px;top:61px;font-size:11px;color:#f4f4f4;letter-spacing:0.05px">Toggle Heads Up Tracking</div>
 <div class="t hud" style="left:6px;top:73px;font-size:11px;color:#f4f4f4;letter-spacing:-0.1px">Shift + D</div>
 <div class="t hud" style="left:57.4px;top:73px;font-size:11px;color:#f4f4f4;letter-spacing:0.05px">Toggle Heads Up Delta Origin Display</div>
 <div class="t hud" style="left:6px;top:85px;font-size:11px;color:#f4f4f4;letter-spacing:-0.1px">Shift + M</div>
 <div class="t hud" style="left:57.4px;top:85px;font-size:11px;color:#f4f4f4;letter-spacing:0.05px">Toggle Board Insight Lens</div>
</div>
<div class="a" style="left:0;top:105px;width:3px;height:599px;background:#a8a8a8"></div>
<div class="a" style="left:1335px;top:105px;width:3px;height:599px;background:#a8a8a8"></div>
<div class="a" style="left:1363px;top:75px;width:3px;height:629px;background:#a8a8a8"></div>
<!-- LAYERS -->
<div id="layers" class="a">
 <div class="a" style="left:0;top:0;width:1366px;height:23px;background:#a8a8a8"></div>
 <div class="a" style="left:3px;top:0;width:1332px;height:20px;background:#f0f0f0"></div>
 <div class="a" style="left:1338px;top:-2px;width:25px;height:22px;background:#f0f0f0"></div>
 <div class="a" style="left:6px;top:3px;width:26px;height:14px;background:#0000ff;border:1px solid #202020"></div>
 <div class="a" style="left:31px;top:3px;width:21px;height:14px;background:#f0f0f0;border:1px solid #909090;border-left:none"></div>
 <div class="t" style="left:37px;top:6px;font-size:10px;color:#6a6a7a">LS</div>
 <svg class="a" style="left:61px;top:5px" width="6" height="9"><path d="M5 0L0 4.5L5 9Z" fill="#a8a8a8"/></svg>
 <svg class="a" style="left:80px;top:5px" width="6" height="9"><path d="M0 0L5 4.5L0 9Z" fill="#000"/></svg>
 <div class="a" style="left:91px;top:1px;width:1px;height:18px;background:#a0a0a0"></div>
 <div class="a ltab" style="left:93.0px;width:73.0px;background:#ffffff"></div>
 <div class="a" style="left:100.5px;top:5px;width:10px;height:9px;background:#ff0000;border:1px solid #606060"></div>
 <div class="t" style="left:116.0px;top:5px;font-size:11px;">Top Layer</div>
 <div class="a ltab" style="left:167.0px;width:94.5px;background:#e3e3e3"></div>
 <div class="a" style="left:173.5px;top:5px;width:10px;height:9px;background:#0000ff;border:1px solid #606060"></div>
 <div class="t" style="left:188.7px;top:5px;font-size:11px;font-weight:bold;letter-spacing:-0.15px;">Bottom Layer</div>
 <div class="a ltab" style="left:262.5px;width:90.8px;background:#ffffff"></div>
 <div class="a" style="left:268.0px;top:5px;width:10px;height:9px;background:#ff00ff;border:1px solid #606060"></div>
 <div class="t" style="left:283.4px;top:5px;font-size:11px;">Mechanical 1</div>
 <div class="a ltab" style="left:354.0px;width:84.4px;background:#ffffff"></div>
 <div class="a" style="left:360.5px;top:5px;width:10px;height:9px;background:#ffff00;border:1px solid #606060"></div>
 <div class="t" style="left:376.0px;top:5px;font-size:11px;">Top Overlay</div>
 <div class="a ltab" style="left:438.4px;width:103.8px;background:#ffffff"></div>
 <div class="a" style="left:445.3px;top:5px;width:10px;height:9px;background:#808000;border:1px solid #606060"></div>
 <div class="t" style="left:460.7px;top:5px;font-size:11px;">Bottom Overlay</div>
 <div class="a ltab" style="left:542.2px;width:74.3px;background:#ffffff"></div>
 <div class="a" style="left:549.3px;top:5px;width:10px;height:9px;background:#808080;border:1px solid #606060"></div>
 <div class="t" style="left:565.2px;top:5px;font-size:11px;">Top Paste</div>
 <div class="a ltab" style="left:616.5px;width:92.1px;background:#ffffff"></div>
 <div class="a" style="left:622.8px;top:5px;width:10px;height:9px;background:#800000;border:1px solid #606060"></div>
 <div class="t" style="left:638.2px;top:5px;font-size:11px;">Bottom Paste</div>
 <div class="a ltab" style="left:708.6px;width:80.8px;background:#ffffff"></div>
 <div class="a" style="left:716.3px;top:5px;width:10px;height:9px;background:#800080;border:1px solid #606060"></div>
 <div class="t" style="left:731.7px;top:5px;font-size:11px;">Top Solder</div>
 <div class="a ltab" style="left:789.4px;width:98.6px;background:#ffffff"></div>
 <div class="a" style="left:797.0px;top:5px;width:10px;height:9px;background:#ff00ff;border:1px solid #606060"></div>
 <div class="t" style="left:811.7px;top:5px;font-size:11px;">Bottom Solder</div>
 <div class="a ltab" style="left:888.0px;width:80.3px;background:#ffffff"></div>
 <div class="a" style="left:895.7px;top:5px;width:10px;height:9px;background:#800000;border:1px solid #606060"></div>
 <div class="t" style="left:910.3px;top:5px;font-size:11px;">Drill Guide</div>
 <div class="a ltab" style="left:968.3px;width:103.2px;background:#ffffff"></div>
 <div class="a" style="left:975.4px;top:5px;width:10px;height:9px;background:#ff00ff;border:1px solid #606060"></div>
 <div class="t" style="left:990.3px;top:5px;font-size:11px;">Keep-Out Layer</div>
 <div class="a ltab" style="left:1071.5px;width:92.7px;background:#ffffff"></div>
 <div class="a" style="left:1078.4px;top:5px;width:10px;height:9px;background:#ff002a;border:1px solid #606060"></div>
 <div class="t" style="left:1093.6px;top:5px;font-size:11px;">Drill Drawing</div>
 <div class="a" style="left:1167px;top:2px;width:1px;height:17px;background:#c8c8c8"></div>
 <svg class="a" style="left:1171px;top:4px" width="28" height="14" viewBox="0 0 28 14">
  <circle cx="4" cy="3.5" r="2.7" fill="#f8f080" stroke="#908020" stroke-width="0.9"/>
  <circle cx="4" cy="10.5" r="2.7" fill="#f8f080" stroke="#908020" stroke-width="0.9"/>
  <path d="M10 2L15 7L10 12Z" fill="#3a80e0"/>
  <path d="M17 3H26L22.5 7V11L20.5 10V7Z" fill="none" stroke="#3a80e0" stroke-width="1.1"/>
 </svg>
 <div class="a" style="left:1200px;top:2px;width:1px;height:17px;background:#c8c8c8"></div>
 <div class="t" style="left:1205px;top:5px;font-size:11px;color:#747474">Snap</div>
 <div class="a" style="left:1234px;top:2px;width:1px;height:17px;background:#c8c8c8"></div>
 <div class="t" style="left:1240px;top:5px;font-size:11px;color:#747474">Mask Level</div>
 <div class="a" style="left:1300px;top:2px;width:1px;height:17px;background:#c8c8c8"></div>
 <div class="t" style="left:1304px;top:5px;font-size:11px;color:#747474">Clear</div>
</div>
<!-- STATUS -->
<div id="status" class="a">
 <div class="t" style="left:5px;top:7px;font-size:11px">X:2240mil Y:3910mil</div>
 <div class="t" style="left:115px;top:7px;font-size:11px">Grid: 5mil</div>
 <div class="t" style="left:185px;top:7px;font-size:11px">(Hotspot Snap)</div>
 <div class="a" style="left:347px;top:5px;width:1px;height:17px;background:#a0a0a0"></div>
 <div class="a" style="left:695px;top:5px;width:1px;height:17px;background:#a0a0a0"></div>
 <div class="a" style="left:1014px;top:4px;width:326px;height:18px;background:#fafafa;border:1px solid #dcdcdc"></div>
 <div class="a" style="left:1064px;top:5px;width:1px;height:16px;background:#dcdcdc"></div>
 <div class="a" style="left:1164px;top:5px;width:1px;height:16px;background:#dcdcdc"></div>
 <div class="a" style="left:1240px;top:5px;width:1px;height:16px;background:#dcdcdc"></div>
 <div class="a" style="left:1283px;top:5px;width:1px;height:16px;background:#dcdcdc"></div>
 <div class="t sb" style="left:1022px;top:8px"><u>S</u>ystem</div>
 <div class="t sb" style="left:1072px;top:8px"><u>D</u>esign Compiler</div>
 <div class="t sb" style="left:1172px;top:8px"><u>I</u>nstruments</div>
 <div class="t sb" style="left:1252px;top:8px"><u>P</u>CB</div>
 <div class="t sb" style="left:1287px;top:8px">Shortcuts</div>
 <div class="a" style="left:1344px;top:4px;width:18px;height:18px;background:#fafafa;border:1px solid #dcdcdc"></div>
 <div class="t sb" style="left:1347px;top:8px;font-size:10.5px;color:#505050">&gt; &gt;</div>
</div>
<!--  <div class="a" style="left:0;top:0;width:1366px;height:40px;background:radial-gradient(ellipse 140px 40px at 800px 30px,#18202a 0%,rgba(20,28,36,0) 100%),radial-gradient(ellipse 260px 50px at 280px 20px,#1e1d1d 0%,rgba(30,29,29,0) 100%),radial-gradient(ellipse 200px 40px at 1000px 10px,#1a1a1a 0%,rgba(26,26,26,0) 100%),#0c0c0d"></div>
 <svg class="a" style="left:16px;top:12px" width="17" height="16" viewBox="0 0 17 16"><path d="M0 2.3L7 1.3V7.5H0Z M8 1.1L17 0V7.5H8Z M0 8.5H7V14.7L0 13.7Z M8 8.5H17V16L8 14.9Z" fill="#fff"/></svg>
 <svg class="a" style="left:61px;top:13px" width="22" height="14" viewBox="0 0 22 14"><rect x="5.5" y="0.5" width="11" height="13" fill="none" stroke="#fff" stroke-width="1.2"/><path d="M3 2.5H1.5V11.5H3M19 2.5H20.5V11.5H19" fill="none" stroke="#fff" stroke-width="1.2"/></svg>
 <svg class="a" style="left:112px;top:9px" width="21" height="22" viewBox="0 0 21 22"><path d="M20 12H6Q6 17 12 17Q16 17 19 15V20Q16 21.5 11.5 21.5Q1 21 1 11Q1.5 1 11 1Q20 1 20 10Z M6 8.5H14.5Q14 5 10.5 5Q7 5 6 8.5Z" fill="#1a7ee0"/></svg>
 <svg class="a" style="left:160px;top:10px" width="22" height="20" viewBox="0 0 22 20"><path d="M0 2H8L10 4H22V19H0Z" fill="#e8b840"/><path d="M0 6H22V19H0Z" fill="#f8d878"/><path d="M6 13H16V19H13V16H9V19H6Z" fill="#28a0e8"/></svg>
 <svg class="a" style="left:209px;top:8px" width="21" height="24" viewBox="0 0 21 24"><path d="M6 6Q6 1 10.5 1Q15 1 15 6" fill="none" stroke="#fff" stroke-width="1.3"/><path d="M1 6H20L21 24H0Z" fill="#fff"/><path d="M5 10L10 9.3V13H5Z M11 9.2L16 8.5V13H11Z M5 14H10V17.7L5 17Z M11 14H16V18.5L11 17.8Z" fill="#222"/></svg>
 <svg class="a" style="left:257px;top:7px" width="24" height="25" viewBox="0 0 24 25"><path d="M22 13.5H8.5Q9 18 13 18Q16 18 18 16H22Q20 22 13 22Q4.5 22 4.5 13Q5 5 13 5Q22 5 22 13.5Z M8.5 11H17.5Q17 8 13 8Q9.5 8 8.5 11Z" fill="#3aa8f0"/><path d="M2 19Q-2 24 5 22Q15 19 23 8Q26 2 21 3" fill="none" stroke="#f0c020" stroke-width="1.8"/></svg>
 <svg class="a" style="left:307px;top:9px" width="22" height="22" viewBox="0 0 22 22"><circle cx="11" cy="11" r="10.5" fill="#dd4433"/><path d="M11 11L20.1 5.75A10.5 10.5 0 0 1 11 21.5Z" fill="#f8c21a"/><path d="M11 11L11 21.5A10.5 10.5 0 0 1 1.9 5.75Z" fill="#1ea05a"/><circle cx="11" cy="11" r="5" fill="#fff"/><circle cx="11" cy="11" r="4" fill="#3a7ee8"/></svg>
 <svg class="a" style="left:356px;top:8px" width="22" height="20" viewBox="0 0 22 20"><rect width="22" height="20" fill="#c8141a"/><path d="M4 16Q8 12 11 3Q12 1 12.5 3Q12 8 18 12Q20 13 17 13Q10 12 5 17Z" fill="none" stroke="#fff" stroke-width="1.1"/></svg>
 <svg class="a" style="left:404px;top:9px" width="24" height="21" viewBox="0 0 24 21"><path d="M0 2.5L13 0V21L0 18.5Z" fill="#d24726"/><rect x="13" y="3" width="10" height="15" fill="#fff" stroke="#d24726"/><path d="M15 6H21M15 9H21M15 12H21" stroke="#d24726" stroke-width="1.2"/><text x="3" y="15" font-size="11" font-weight="bold" fill="#fff" font-family="Liberation Sans">P</text></svg>
 <div class="a" style="left:441px;top:0;width:48px;height:38px;background:#383a3c"></div>
 <svg class="a" style="left:452px;top:8px" width="26" height="24" viewBox="0 0 26 24">
  <path d="M1 21L10.5 4H15.5L16.5 21Z" fill="#262626"/>
  <path d="M7.5 15L11 8L11.5 15Z" fill="#b09868"/>
  <rect x="7" y="17.5" width="4" height="3" fill="#a08860"/>
  <path d="M0.5 21.5H17L20 19.5" fill="none" stroke="#a88e62" stroke-width="1.8"/>
  <text x="13.5" y="10" font-size="9" fill="#b09868" font-family="Liberation Sans" font-weight="bold" letter-spacing="-0.5">16</text>
  <circle cx="21" cy="14" r="2" fill="none" stroke="#a88e62" stroke-width="1.3"/>
  <circle cx="21" cy="19.5" r="2" fill="none" stroke="#a88e62" stroke-width="1.3"/>
  <path d="M16 14H19" stroke="#a88e62" stroke-width="1.3"/>
 </svg>
 <svg class="a" style="left:501px;top:8px" width="26" height="24" viewBox="0 0 26 24">
  <path d="M2 15Q0 7 9 5Q18 3 21 9Q23 14 18 16Q14 17 13 19Q11 23 6 21Q3 19 2 15Z" fill="#b8dcf4" stroke="#80b0d8" stroke-width="0.6"/>
  <circle cx="10.5" cy="14" r="1.6" fill="#1a1a1a"/>
  <circle cx="5" cy="13" r="1.8" fill="#e02828"/>
  <circle cx="9.5" cy="8" r="1.7" fill="#38b838"/>
  <circle cx="14.5" cy="6.5" r="1.8" fill="#f0b020"/>
  <path d="M10.5 23L19 6" stroke="#e88a20" stroke-width="2.2"/>
  <path d="M18.5 7L21.5 1.5L24.5 3.5Z" fill="#d8b880"/>
 </svg>
 <div class="a" style="left:151px;top:38px;width:40px;height:2px;background:#f0b890"></div>
 <div class="a" style="left:298px;top:38px;width:40px;height:2px;background:#f0b890"></div>
 <div class="a" style="left:347px;top:38px;width:40px;height:2px;background:#f0b890"></div>
 <div class="a" style="left:396px;top:38px;width:40px;height:2px;background:#f0b890"></div>
 <div class="a" style="left:441px;top:38px;width:48px;height:2px;background:#f0b890"></div>
 <div class="a" style="left:494px;top:38px;width:40px;height:2px;background:#f0b890"></div>
 <svg class="a" style="left:1132px;top:16px" width="13" height="7" viewBox="0 0 13 7"><path d="M0.5 6.5L6.5 0.7L12.5 6.5" fill="none" stroke="#fff" stroke-width="1.1"/></svg>
 <svg class="a" style="left:1153px;top:14px" width="18" height="11" viewBox="0 0 18 11"><path d="M1 1V4M3 1V4M0.5 4H3.5V6H0.5Z M2 6V9H5" fill="none" stroke="#fff" stroke-width="0.9"/><rect x="5.5" y="3.5" width="11" height="6.5" fill="none" stroke="#fff"/><rect x="7" y="5" width="8" height="3.5" fill="#fff"/><rect x="16.5" y="5.5" width="1.5" height="2.5" fill="#fff"/></svg>
 <svg class="a" style="left:1181px;top:15px" width="13" height="12" viewBox="0 0 13 12"><path d="M1 12Q1 1 12 1M3.5 12Q3.5 3.5 12 3.5M6 12Q6 6 12 6M8.5 12Q8.5 8.5 12 8.5" fill="none" stroke="#fff" stroke-width="1"/><rect x="10" y="9" width="3" height="3" fill="#fff"/></svg>
 <svg class="a" style="left:1202px;top:14px" width="17" height="13" viewBox="0 0 17 13"><path d="M0.5 4.5H3.5L7.5 0.5V12.5L3.5 8.5H0.5Z" fill="none" stroke="#fff" stroke-width="1"/><path d="M10 4Q11.5 6.5 10 9M12.5 2.5Q15 6.5 12.5 10.5M15 1Q18 6.5 15 12" fill="none" stroke="#fff" stroke-width="1"/></svg>
 <svg class="a" style="left:1226px;top:12px" width="17" height="17" viewBox="0 0 17 17"><path d="M0.5 0.5H16V10H9V14H0.5Z" fill="#fff"/><path d="M2.5 3H13.5M2.5 5.5H13.5M2.5 8H8" stroke="#222" stroke-width="0.9"/><circle cx="12" cy="13" r="3.5" fill="#222" stroke="#fff" stroke-width="1"/><path d="M10 13H14" stroke="#fff"/></svg>
 <div class="t" style="left:1252px;top:15px;font-size:11px;color:#fff">ENG</div>
 <div class="t" style="left:1297px;top:6px;font-size:11.5px;color:#fff">10:52 AM</div>
 <div class="t" style="left:1292px;top:22px;font-size:11.5px;color:#fff">29/10/2016</div>
 <div class="a" style="left:1361px;top:0;width:1px;height:40px;background:#555"></div>
 -->
<div id="task" class="a">
 <div class="a" style="left:0;top:0;width:1366px;height:40px;background:radial-gradient(ellipse 140px 40px at 800px 30px,#18202a 0%,rgba(20,28,36,0) 100%),radial-gradient(ellipse 260px 50px at 280px 20px,#1e1d1d 0%,rgba(30,29,29,0) 100%),radial-gradient(ellipse 200px 40px at 1000px 10px,#1a1a1a 0%,rgba(26,26,26,0) 100%),#0c0c0d"></div>
 <svg class="a" style="left:16px;top:12px" width="17" height="16" viewBox="0 0 17 16"><path d="M0 2.3L7 1.3V7.5H0Z M8 1.1L17 0V7.5H8Z M0 8.5H7V14.7L0 13.7Z M8 8.5H17V16L8 14.9Z" fill="#fff"/></svg>
 <svg class="a" style="left:61px;top:13px" width="22" height="14" viewBox="0 0 22 14"><rect x="5.5" y="0.5" width="11" height="13" fill="none" stroke="#fff" stroke-width="1.2"/><path d="M3 2.5H1.5V11.5H3M19 2.5H20.5V11.5H19" fill="none" stroke="#fff" stroke-width="1.2"/></svg>
 <svg class="a" style="left:112px;top:9px" width="21" height="22" viewBox="0 0 21 22"><path d="M20 12H6Q6 17 12 17Q16 17 19 15V20Q16 21.5 11.5 21.5Q1 21 1 11Q1.5 1 11 1Q20 1 20 10Z M6 8.5H14.5Q14 5 10.5 5Q7 5 6 8.5Z" fill="#1a7ee0"/></svg>
 <svg class="a" style="left:160px;top:10px" width="22" height="20" viewBox="0 0 22 20"><path d="M0 2H8L10 4H22V19H0Z" fill="#e8b840"/><path d="M0 6H22V19H0Z" fill="#f8d878"/><path d="M6 13H16V19H13V16H9V19H6Z" fill="#28a0e8"/></svg>
 <svg class="a" style="left:209px;top:8px" width="21" height="24" viewBox="0 0 21 24"><path d="M6 6Q6 1 10.5 1Q15 1 15 6" fill="none" stroke="#fff" stroke-width="1.3"/><path d="M1 6H20L21 24H0Z" fill="#fff"/><path d="M5 10L10 9.3V13H5Z M11 9.2L16 8.5V13H11Z M5 14H10V17.7L5 17Z M11 14H16V18.5L11 17.8Z" fill="#222"/></svg>
 <svg class="a" style="left:257px;top:7px" width="24" height="25" viewBox="0 0 24 25"><path d="M22 13.5H8.5Q9 18 13 18Q16 18 18 16H22Q20 22 13 22Q4.5 22 4.5 13Q5 5 13 5Q22 5 22 13.5Z M8.5 11H17.5Q17 8 13 8Q9.5 8 8.5 11Z" fill="#3aa8f0"/><path d="M2 19Q-2 24 5 22Q15 19 23 8Q26 2 21 3" fill="none" stroke="#f0c020" stroke-width="1.8"/></svg>
 <svg class="a" style="left:307px;top:9px" width="22" height="22" viewBox="0 0 22 22"><circle cx="11" cy="11" r="10.5" fill="#dd4433"/><path d="M11 11L20.1 5.75A10.5 10.5 0 0 1 11 21.5Z" fill="#f8c21a"/><path d="M11 11L11 21.5A10.5 10.5 0 0 1 1.9 5.75Z" fill="#1ea05a"/><circle cx="11" cy="11" r="5" fill="#fff"/><circle cx="11" cy="11" r="4" fill="#3a7ee8"/></svg>
 <svg class="a" style="left:356px;top:8px" width="22" height="20" viewBox="0 0 22 20"><rect width="22" height="20" fill="#c8141a"/><path d="M4 16Q8 12 11 3Q12 1 12.5 3Q12 8 18 12Q20 13 17 13Q10 12 5 17Z" fill="none" stroke="#fff" stroke-width="1.1"/></svg>
 <svg class="a" style="left:404px;top:9px" width="24" height="21" viewBox="0 0 24 21"><path d="M0 2.5L13 0V21L0 18.5Z" fill="#d24726"/><rect x="13" y="3" width="10" height="15" fill="#fff" stroke="#d24726"/><path d="M15 6H21M15 9H21M15 12H21" stroke="#d24726" stroke-width="1.2"/><text x="3" y="15" font-size="11" font-weight="bold" fill="#fff" font-family="Liberation Sans">P</text></svg>
 <div class="a" style="left:441px;top:0;width:48px;height:38px;background:#383a3c"></div>
 <svg class="a" style="left:452px;top:8px" width="26" height="24" viewBox="0 0 26 24">
  <path d="M1 21L10.5 4H15.5L16.5 21Z" fill="#262626"/>
  <path d="M7.5 15L11 8L11.5 15Z" fill="#b09868"/>
  <rect x="7" y="17.5" width="4" height="3" fill="#a08860"/>
  <path d="M0.5 21.5H17L20 19.5" fill="none" stroke="#a88e62" stroke-width="1.8"/>
  <text x="13.5" y="10" font-size="9" fill="#b09868" font-family="Liberation Sans" font-weight="bold" letter-spacing="-0.5">16</text>
  <circle cx="21" cy="14" r="2" fill="none" stroke="#a88e62" stroke-width="1.3"/>
  <circle cx="21" cy="19.5" r="2" fill="none" stroke="#a88e62" stroke-width="1.3"/>
  <path d="M16 14H19" stroke="#a88e62" stroke-width="1.3"/>
 </svg>
 <svg class="a" style="left:501px;top:8px" width="26" height="24" viewBox="0 0 26 24">
  <path d="M2 15Q0 7 9 5Q18 3 21 9Q23 14 18 16Q14 17 13 19Q11 23 6 21Q3 19 2 15Z" fill="#b8dcf4" stroke="#80b0d8" stroke-width="0.6"/>
  <circle cx="10.5" cy="14" r="1.6" fill="#1a1a1a"/>
  <circle cx="5" cy="13" r="1.8" fill="#e02828"/>
  <circle cx="9.5" cy="8" r="1.7" fill="#38b838"/>
  <circle cx="14.5" cy="6.5" r="1.8" fill="#f0b020"/>
  <path d="M10.5 23L19 6" stroke="#e88a20" stroke-width="2.2"/>
  <path d="M18.5 7L21.5 1.5L24.5 3.5Z" fill="#d8b880"/>
 </svg>
 <div class="a" style="left:151px;top:38px;width:40px;height:2px;background:#f0b890"></div>
 <div class="a" style="left:298px;top:38px;width:40px;height:2px;background:#f0b890"></div>
 <div class="a" style="left:347px;top:38px;width:40px;height:2px;background:#f0b890"></div>
 <div class="a" style="left:396px;top:38px;width:40px;height:2px;background:#f0b890"></div>
 <div class="a" style="left:441px;top:38px;width:48px;height:2px;background:#f0b890"></div>
 <div class="a" style="left:494px;top:38px;width:40px;height:2px;background:#f0b890"></div>
 <svg class="a" style="left:1132px;top:16px" width="13" height="7" viewBox="0 0 13 7"><path d="M0.5 6.5L6.5 0.7L12.5 6.5" fill="none" stroke="#fff" stroke-width="1.1"/></svg>
 <svg class="a" style="left:1153px;top:14px" width="18" height="11" viewBox="0 0 18 11"><path d="M1 1V4M3 1V4M0.5 4H3.5V6H0.5Z M2 6V9H5" fill="none" stroke="#fff" stroke-width="0.9"/><rect x="5.5" y="3.5" width="11" height="6.5" fill="none" stroke="#fff"/><rect x="7" y="5" width="8" height="3.5" fill="#fff"/><rect x="16.5" y="5.5" width="1.5" height="2.5" fill="#fff"/></svg>
 <svg class="a" style="left:1181px;top:15px" width="13" height="12" viewBox="0 0 13 12"><path d="M1 12Q1 1 12 1M3.5 12Q3.5 3.5 12 3.5M6 12Q6 6 12 6M8.5 12Q8.5 8.5 12 8.5" fill="none" stroke="#fff" stroke-width="1"/><rect x="10" y="9" width="3" height="3" fill="#fff"/></svg>
 <svg class="a" style="left:1202px;top:14px" width="17" height="13" viewBox="0 0 17 13"><path d="M0.5 4.5H3.5L7.5 0.5V12.5L3.5 8.5H0.5Z" fill="none" stroke="#fff" stroke-width="1"/><path d="M10 4Q11.5 6.5 10 9M12.5 2.5Q15 6.5 12.5 10.5M15 1Q18 6.5 15 12" fill="none" stroke="#fff" stroke-width="1"/></svg>
 <svg class="a" style="left:1226px;top:12px" width="17" height="17" viewBox="0 0 17 17"><path d="M0.5 0.5H16V10H9V14H0.5Z" fill="#fff"/><path d="M2.5 3H13.5M2.5 5.5H13.5M2.5 8H8" stroke="#222" stroke-width="0.9"/><circle cx="12" cy="13" r="3.5" fill="#222" stroke="#fff" stroke-width="1"/><path d="M10 13H14" stroke="#fff"/></svg>
 <div class="t" style="left:1252px;top:15px;font-size:11px;color:#fff">ENG</div>
 <div class="t" style="left:1297px;top:6px;font-size:11.5px;color:#fff">10:52 AM</div>
 <div class="t" style="left:1292px;top:22px;font-size:11.5px;color:#fff">29/10/2016</div>
 <div class="a" style="left:1361px;top:0;width:1px;height:40px;background:#555"></div>

</div>

</body></html>
